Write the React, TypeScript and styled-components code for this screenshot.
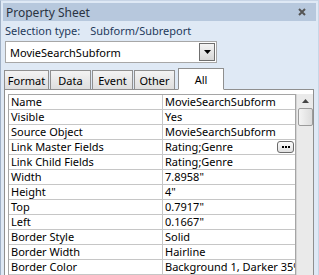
import styled, { createGlobalStyle } from "styled-components";

const GlobalStyle = createGlobalStyle`
  html, body {
    margin: 0;
    padding: 0;
    background: #dfe9f5;
  }
  * {
    box-sizing: border-box;
  }
`;

export const Frame = styled.div`
  width: 319px;
  height: 275px;
  overflow: hidden;
  background: #dfe9f5;
  border-left: 1px solid #9fb0c6;
  border-top: 1px solid #c8d5e6;
  border-right: 1px solid #c8d5e6;
  padding: 2px 2px 0 2px;
  display: flex;
  flex-direction: column;
  font-family: "Noto Sans", "Open Sans", sans-serif;
  font-size: 11px;
  color: #000;
`;

export const TitleBar = styled.div`
  height: 18px;
  background: #b7c8dd;
  display: flex;
  align-items: center;
  justify-content: space-between;
  padding: 0 10px 0 3px;
  font-size: 12px;
  color: #2a3342;
`;

export const SelectionRow = styled.div`
  height: 18px;
  display: flex;
  align-items: center;
  padding-left: 2px;
  color: #1e395b;
  gap: 10px;
`;

export const Combo = styled.div`
  margin: 2px 0 0 2px;
  width: 212px;
  height: 22px;
  background: #fff;
  border: 1px solid #a7a7a7;
  display: flex;
  align-items: center;
  justify-content: space-between;
  padding: 0 1px 0 4px;
`;

export const ComboButton = styled.div`
  width: 16px;
  height: 18px;
  border: 1px solid #6f6f6f;
  background: linear-gradient(#f4f4f4, #d6d6d6);
  display: flex;
  align-items: center;
  justify-content: center;
`;

export const TabStrip = styled.div`
  margin-top: 5px;
  height: 21px;
  display: flex;
  align-items: flex-end;
  gap: 1px;
  padding-left: 1px;
  position: relative;
  z-index: 1;
`;

export const Tab = styled.div<{ $active?: boolean; $w: number }>`
  height: ${(p) => (p.$active ? "22px" : "19px")};
  width: ${(p) => p.$w}px;
  border: 1px solid #8f8f8f;
  border-bottom: ${(p) => (p.$active ? "1px solid #fff" : "none")};
  background: ${(p) =>
    p.$active ? "#fff" : "linear-gradient(#f3f3f3, #dedede)"};
  display: flex;
  align-items: ${(p) => (p.$active ? "flex-start" : "center")};
  padding-top: ${(p) => (p.$active ? "3px" : "0")};
  justify-content: center;
  margin-left: ${(p) => (p.$active ? "2px" : "0")};
  margin-bottom: ${(p) => (p.$active ? "-1px" : "0")};
`;

export const Content = styled.div`
  flex: 1;
  margin-left: 1px;
  width: 310px;
  background: #fff;
  border: 1px solid #8f8f8f;
  border-bottom: none;
  padding: 4px 0 0 3px;
  display: flex;
`;

export const Grid = styled.div`
  width: 288px;
  border: 1px solid #a5a5a5;
  border-bottom: none;
  align-self: flex-start;
`;

export const Row = styled.div`
  height: 15px;
  display: grid;
  grid-template-columns: 153px 1fr;
  border-bottom: 1px solid #c6c6c6;
`;

export const Cell = styled.div`
  line-height: 14px;
  padding-left: 2px;
  white-space: nowrap;
  overflow: hidden;
  display: flex;
  align-items: center;
  justify-content: space-between;
  & + & {
    border-left: 1px solid #c6c6c6;
  }
`;

export const Ellipsis = styled.div`
  flex-shrink: 0;
  width: 17px;
  height: 12px;
  border: 1px solid #6a6a6a;
  border-radius: 3px;
  background: linear-gradient(#fcfcfc, #e0e0e0);
  margin-right: 1px;
  display: flex;
  align-items: center;
  justify-content: center;
  gap: 1px;
`;

export const Dot = styled.span`
  width: 2px;
  height: 2px;
  background: #000;
`;

export const ScrollBar = styled.div`
  width: 17px;
  background: #eaeaea;
  border-left: 1px solid #d4d4d4;
  display: flex;
  flex-direction: column;
  align-items: center;
  padding-top: 5px;
  gap: 5px;
`;

export const Thumb = styled.div`
  width: 15px;
  height: 18px;
  border: 1px solid #9b9b9b;
  border-radius: 2px;
  background: linear-gradient(90deg, #f4f4f4, #dcdcdc);
`;

const rows: [string, string, boolean?][] = [
  ["Name", "MovieSearchSubform"],
  ["Visible", "Yes"],
  ["Source Object", "MovieSearchSubform"],
  ["Link Master Fields", "Rating;Genre", true],
  ["Link Child Fields", "Rating;Genre"],
  ["Width", "7.8958\""],
  ["Height", "4\""],
  ["Top", "0.7917\""],
  ["Left", "0.1667\""],
  ["Border Style", "Solid"],
  ["Border Width", "Hairline"],
  ["Border Color", "Background 1, Darker 35%"],
];

const tabs = [
  { label: "Format", w: 45 },
  { label: "Data", w: 41 },
  { label: "Event", w: 41 },
  { label: "Other", w: 41 },
];

export default function App() {
  return (
    <>
      <GlobalStyle />
      <Frame>
        <TitleBar>
          <span>Property Sheet</span>
          <svg width="8" height="8" viewBox="0 0 8 8">
            <path d="M1 1L7 7M7 1L1 7" stroke="#555" strokeWidth="2" />
          </svg>
        </TitleBar>
        <SelectionRow>
          <span>Selection type:</span>
          <span>Subform/Subreport</span>
        </SelectionRow>
        <Combo>
          <span>MovieSearchSubform</span>
          <ComboButton>
            <svg width="7" height="4" viewBox="0 0 7 4">
              <path d="M0 0H7L3.5 4Z" fill="#000" />
            </svg>
          </ComboButton>
        </Combo>
        <TabStrip>
          {tabs.map((t) => (
            <Tab key={t.label} $w={t.w}>
              {t.label}
            </Tab>
          ))}
          <Tab $active $w={46}>
            All
          </Tab>
        </TabStrip>
        <Content>
          <Grid>
            {rows.map(([k, v, btn]) => (
              <Row key={k}>
                <Cell>{k}</Cell>
                <Cell>
                  {v}
                  {btn && (
                    <Ellipsis>
                      <Dot />
                      <Dot />
                      <Dot />
                    </Ellipsis>
                  )}
                </Cell>
              </Row>
            ))}
          </Grid>
          <ScrollBar>
            <svg width="7" height="4" viewBox="0 0 7 4">
              <path d="M0 4H7L3.5 0Z" fill="#444" />
            </svg>
            <Thumb />
          </ScrollBar>
        </Content>
      </Frame>
    </>
  );
}
